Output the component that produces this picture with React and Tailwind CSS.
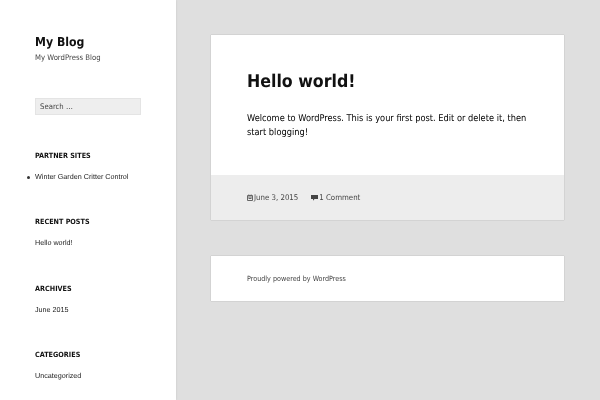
const WIDGETS = [
  { title: 'RECENT POSTS', item: 'Hello world!' },
  { title: 'ARCHIVES', item: 'June 2015' },
  { title: 'CATEGORIES', item: 'Uncategorized' },
]

const COND = "font-['DejaVu_Sans_Condensed','DejaVu_Sans',sans-serif] [font-stretch:condensed] [will-change:opacity]"
const SMALL = "font-['Liberation_Sans',sans-serif] text-[7.2px] leading-[12px] text-[#222] [will-change:opacity]"
const CARD = 'bg-white shadow-[0_0_1px_rgba(0,0,0,0.3)]'
const META = `${COND} text-[7.8px] text-[#444]`

function CalendarIcon() {
  return (
    <svg width="6" height="7" viewBox="0 0 6 7" className="mr-[1px]">
      <path d="M.5 1.5h5v5h-5z M.5 3h5 M1.8 .5v1 M4.2 .5v1 M1.5 4.5h3" fill="none" stroke="#666" strokeWidth="1" />
    </svg>
  )
}

function CommentIcon() {
  return (
    <svg width="7" height="7" viewBox="0 0 7 7" className="mr-[1px]">
      <path d="M0 1h7v4H3.5L2 6.8V5H0z" fill="#444" />
    </svg>
  )
}

export default function App() {
  return (
    <div className="flex h-[400px] w-[600px] overflow-hidden bg-[#dfdfdf] [text-rendering:geometricPrecision]">
      <aside className="w-[176px] shrink-0 bg-white pl-[35px] pr-[35px] pt-[35px] shadow-[0_0_2px_rgba(0,0,0,0.12)]">
        <h1 className={`${COND} text-[12.2px] font-bold leading-[15px] text-[#111]`}>My Blog</h1>
        <p className={`${COND} mt-[2px] text-[7.7px] leading-[12px] text-[#444]`}>My WordPress Blog</p>

        <div className="mt-[34px] flex h-[17px] w-[106px] items-center border border-[#e4e4e4] bg-[#eeeeee] pl-[4px]">
          <span className={`${COND} text-[7.7px] text-[#444]`}>Search …</span>
        </div>

        <h2 className={`${COND} mt-[35px] text-[7.2px] font-bold leading-[12px] text-[#111]`}>PARTNER SITES</h2>
        <ul className="mt-[9px]">
          <li className={`${SMALL} relative`}>
            <span className="absolute left-[-8px] top-[5px] h-[3px] w-[3px] rounded-full bg-[#333]" />
            Winter Garden Critter Control
          </li>
        </ul>

        {WIDGETS.map(w => (
          <div key={w.title} className="mt-[33.4px]">
            <h2 className={`${COND} text-[7.2px] font-bold leading-[12px] text-[#111]`}>{w.title}</h2>
            <p className={`${SMALL} mt-[9px]`}>{w.item}</p>
          </div>
        ))}
      </aside>

      <main className="flex-1 pl-[35px] pr-[36px] pt-[35px]">
        <article className={CARD}>
          <div className="h-[140px] px-[36px] pt-[35px]">
            <h2 className={`${COND} text-[17.6px] font-bold leading-[24px] text-[#111]`}>Hello world!</h2>
            <p className={`${COND} mt-[18px] text-[9.2px] leading-[14px] text-black`}>
              Welcome to WordPress. This is your first post. Edit or delete it, then start blogging!
            </p>
          </div>
          <div className="flex h-[45px] items-center gap-[13px] bg-[#ededed] px-[36px]">
            <span className="flex items-center"><CalendarIcon /><span className={META}>June 3, 2015</span></span>
            <span className="flex items-center"><CommentIcon /><span className={META}>1 Comment</span></span>
          </div>
        </article>

        <footer className={`${CARD} mt-[36px] flex h-[45px] items-center px-[36px] pt-[1px]`}>
          <span className={`${COND} text-[7.15px] text-[#444]`}>Proudly powered by WordPress</span>
        </footer>
      </main>
    </div>
  )
}
